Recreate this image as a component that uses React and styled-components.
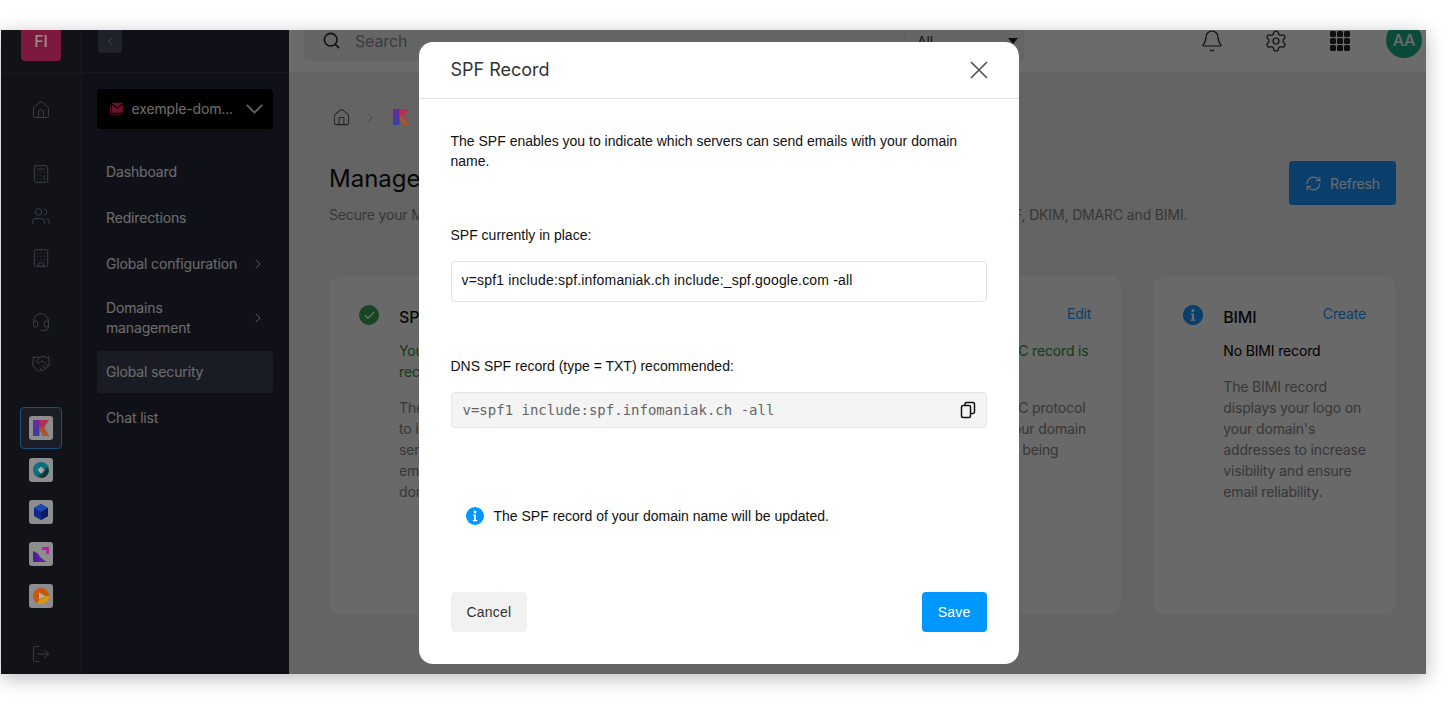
import React from "react";
import styled, { createGlobalStyle } from "styled-components";
import { Home, Calculator, Users, Building, Headset, Handshake, LogOut, ChevronLeft, ChevronRight, ChevronDown, Search, Bell, Settings, RefreshCw, Check } from "lucide-react";

const Global = createGlobalStyle`
  html, body { margin: 0; padding: 0; background: #fff; }
  body { font-family: Inter, "Liberation Sans", sans-serif; font-size: 14px; }
  * { box-sizing: border-box; }
`;

const Page = styled.div`
  width: 1456px;
  height: 704px;
  padding: 30px 30px 30px 1px;
  overflow: hidden;
`;
const Frame = styled.div`
  position: relative;
  width: 1425px;
  height: 644px;
  overflow: hidden;
  box-shadow: 0 4px 18px rgba(0, 0, 0, 0.28);
`;
const Screen = styled.div`
  display: flex;
  height: 664px;
  margin-top: -20px;
  background: #eeeeef;
  color: #222;
  letter-spacing: -0.15px;
`;
const Rail = styled.nav`
  width: 81px;
  flex: none;
  background: #2c2f3c;
  border-right: 1px solid #2f3242;
  display: flex;
  flex-direction: column;
  align-items: center;
`;
const RailHead = styled.div`
  width: 100%;
  height: 63px;
  flex: none;
  display: flex;
  align-items: center;
  justify-content: center;
  border-bottom: 1px solid #363a4c;
`;
const OrgBadge = styled.div`
  position: relative;
  z-index: 2;
  width: 40px;
  height: 40px;
  border-radius: 4px;
  background: #7b1a3c;
  color: #9a8a90;
  font-size: 16px;
  font-weight: 500;
  display: flex;
  align-items: center;
  justify-content: center;
`;
const RailGroup = styled.div`
  display: flex;
  flex-direction: column;
  margin-top: 22px;
  ${RailHead} + & { margin-top: 16px; }
`;
const RailItem = styled.div`
  width: 42px;
  height: 42px;
  display: flex;
  align-items: center;
  justify-content: center;
  color: #7f95aa;
  border-radius: 4px;
  background: ${(p) => (p.$active ? "#1b1d27" : "transparent")};
  border: ${(p) => (p.$active ? "1px solid #1c4f78" : "none")};
  position: relative;
  z-index: ${(p) => (p.$active ? 2 : "auto")};
`;
const RailFoot = styled(RailItem)`
  margin-top: 16px;
`;
const AppTile = styled.div`
  width: 24px;
  height: 24px;
  border-radius: 3px;
  background: #8d8d8d;
  display: flex;
  align-items: center;
  justify-content: center;
  position: relative;
  z-index: 2;
`;
const Sidebar = styled.aside`
  width: 207px;
  flex: none;
  background: #262a3a;
  display: flex;
  flex-direction: column;
`;
const SideHead = styled.div`
  height: 63px;
  flex: none;
  padding-left: 16px;
  display: flex;
  align-items: center;
  border-bottom: 1px solid #363a4c;
`;
const BackButton = styled.div`
  width: 24px;
  height: 24px;
  border-radius: 4px;
  background: #4a4f66;
  color: #c4c4c8;
  display: flex;
  align-items: center;
  justify-content: center;
`;
const SideBody = styled.div`
  padding: 16px 16px 0 15px;
`;
const DomainPicker = styled.div`
  height: 40px;
  border-radius: 4px;
  background: #000;
  display: flex;
  align-items: center;
  padding: 0 4px 0 13px;
  gap: 7px;
  color: #fff;
  font-size: 14px;
  margin-bottom: 22px;
`;
const PickerLabel = styled.span`
  flex: 1;
  white-space: nowrap;
  margin: -1px 0 0 1px;
`;
const NavList = styled.div`
  display: flex;
  flex-direction: column;
  gap: 4px;
`;
const NavItem = styled.div`
  min-height: ${(p) => (p.$tall ? "58px" : "42px")};
  border-radius: 4px;
  padding: 0 7px ${(p) => (p.$tall ? "1px" : "0")} 9px;
  display: flex;
  align-items: center;
  justify-content: space-between;
  color: #fff;
  font-size: 14px;
  line-height: 20px;
  background: ${(p) => (p.$active ? "#3f4459" : "transparent")};
`;
const NavChevron = styled(ChevronRight)`
  flex: none;
  color: #e8e8e8;
`;
const Main = styled.main`
  flex: 1;
  min-width: 0;
  display: flex;
  flex-direction: column;
`;
const TopBar = styled.header`
  height: 62px;
  flex: none;
  background: #fff;
  display: flex;
  align-items: center;
  padding: 0 4px 0 15px;
`;
const SearchBox = styled.div`
  width: 601px;
  height: 40px;
  background: #f0f0f0;
  border-radius: 4px 0 0 4px;
  display: flex;
  align-items: center;
  padding-left: 17px;
  gap: 14px;
  color: #222;
`;
const SearchIcon = styled(Search)`
  margin-left: 1px;
  margin-top: -2px;
`;
const SearchText = styled.span`
  font-size: 16px;
  color: #8a8f94;
`;
const ScopeSelect = styled.div`
  width: 119px;
  height: 40px;
  background: #f0f0f0;
  border-left: 1px solid #dcdcdc;
  border-radius: 0 4px 4px 0;
  display: flex;
  align-items: center;
  justify-content: space-between;
  padding: 0 6px 0 11px;
  font-size: 14px;
  color: #333;
  &::after {
    content: "";
    border-left: 5px solid transparent;
    border-right: 5px solid transparent;
    border-top: 6px solid #222;
  }
`;
const TopIcons = styled.div`
  margin-left: auto;
  display: flex;
  align-items: center;
  gap: 40px;
  color: #222;
`;
const Avatar = styled.div`
  width: 36px;
  height: 36px;
  border-radius: 50%;
  background: #1ab08c;
  margin: -2px 0 0 -4px;
  color: #fff;
  font-size: 16px;
  font-weight: 500;
  display: flex;
  align-items: center;
  justify-content: center;
`;
const AppsGrid = styled.div`
  display: grid;
  grid-template-columns: repeat(3, 6px);
  grid-auto-rows: 6px;
  gap: 1px;
  margin-left: 2px;
`;
const AppsDot = styled.i`
  display: block;
  background: #222;
  border-radius: 1.5px;
`;
const Content = styled.div`
  padding: 35px 30px 0 40px;
`;
const Crumbs = styled.div`
  display: flex;
  align-items: center;
  height: 20px;
  gap: 12px;
  padding-left: 3px;
  color: #555;
`;
const Brand = styled.div`
  position: relative;
  z-index: 2;
  display: flex;
  margin-left: 3px;
`;
const HeadRow = styled.div`
  display: flex;
  justify-content: space-between;
  align-items: flex-start;
  margin-top: 34px;
`;
const PageTitle = styled.h1`
  margin: 2px 0 0;
  font-size: 24px;
  font-weight: 400;
  line-height: 32px;
  color: #111;
  letter-spacing: 0;
`;
const RefreshButton = styled.div`
  width: 107px;
  height: 44px;
  border-radius: 4px;
  background: #1896ff;
  color: #fff;
  display: flex;
  align-items: center;
  justify-content: center;
  gap: 8px;
  font-size: 14px;
`;
const Lead = styled.p`
  margin: 0;
  line-height: 20px;
  font-size: 14px;
  color: #858585;
  white-space: nowrap;
`;
const Cards = styled.div`
  display: grid;
  grid-template-columns: repeat(4, 1fr);
  gap: 32px;
  margin-top: 51px;
`;
const Card = styled.section`
  height: 338px;
  background: #f9f9fa;
  border-radius: 12px;
  padding: 29px 30px;
  display: grid;
  grid-template-columns: 20px 1fr;
  column-gap: 20px;
  align-content: start;
`;
const CardBody = styled.div`
  min-width: 0;
  margin-top: -1px;
`;
const CardHead = styled.div`
  display: flex;
  justify-content: space-between;
  align-items: flex-start;
  height: 24px;
`;
const CardTitle = styled.h2`
  margin: 3px 0 0;
  font-size: 16px;
  font-weight: 500;
  line-height: 20px;
  color: #111;
`;
const CardLink = styled.span`
  color: #1896ff;
  font-size: 14px;
  line-height: 20px;
`;
const Status = styled.p`
  margin: 12px 0 0;
  font-size: 14px;
  line-height: 21px;
  white-space: nowrap;
  color: ${(p) => (p.$ok ? "#358c3d" : "#000")};
`;
const CardText = styled.p`
  margin: 15px 0 0;
  font-size: 14px;
  line-height: 21px;
  color: #858585;
`;
const StatusIcon = styled.div`
  width: 20px;
  height: 20px;
  border-radius: 50%;
  background: ${(p) => p.$bg};
  color: #fff;
  display: flex;
  align-items: center;
  justify-content: center;
`;
const Backdrop = styled.div`
  position: absolute;
  inset: 0;
  z-index: 1;
  background: rgba(0, 0, 0, 0.58);
  display: flex;
  justify-content: center;
  padding: 12px 0 0 10px;
`;
const Modal = styled.div`
  width: 600px;
  height: 622px;
  background: #fff;
  border-radius: 14px;
  font-family: "Liberation Sans", Arial, sans-serif;
  font-size: 14px;
  color: #111;
  display: flex;
  flex-direction: column;
`;
const ModalHead = styled.div`
  height: 57px;
  flex: none;
  padding: 0 31px 1px 32px;
  border-bottom: 1px solid #e3e3e3;
  display: flex;
  align-items: center;
  justify-content: space-between;
`;
const ModalTitle = styled.h3`
  margin: 0;
  font-family: Inter, "Liberation Sans", sans-serif;
  font-size: 18px;
  font-weight: 400;
  color: #333;
`;
const ModalBody = styled.div`
  padding: 32px 32px 0;
  display: flex;
  flex-direction: column;
`;
const Copy = styled.p`
  margin: 0;
  line-height: 20px;
`;
const Label = styled.label`
  display: block;
  margin-top: 54px;
  line-height: 20px;
`;
const Field = styled.div`
  margin-top: 16px;
  height: 41px;
  border: 1px solid #e3e3e3;
  border-radius: 4px;
  display: flex;
  align-items: center;
  padding: 0 0 3px 10px;
  letter-spacing: 0.18px;
`;
const CodeField = styled.div`
  margin-top: 16px;
  height: 36px;
  border: 1px solid #e6e6e6;
  border-radius: 4px;
  background: #f4f4f4;
  display: flex;
  align-items: center;
  justify-content: space-between;
  padding: 0 10px 0 11px;
  font-family: "DejaVu Sans Mono", "Liberation Mono", monospace;
  font-size: 14px;
  color: #666;
  white-space: nowrap;
`;
const Notice = styled.div`
  margin-top: 78px;
  padding-left: 15px;
  height: 20px;
  display: flex;
  align-items: center;
  gap: 10px;
`;
const ModalFoot = styled.div`
  display: flex;
  justify-content: space-between;
  padding: 0 32px;
  margin-top: 66px;
`;
const Button = styled.div`
  height: 40px;
  border-radius: 4px;
  padding: 0 16px;
  display: flex;
  align-items: center;
  font-size: 14px;
  letter-spacing: 0.2px;
  background: ${(p) => (p.$primary ? "#0098ff" : "#f1f1f1")};
  color: ${(p) => (p.$primary ? "#fff" : "#333")};
`;

const KLogo = ({ size = 16 }) => (
  <svg width={size} height={size} viewBox="0 0 16 16">
    <defs>
      <linearGradient id="kb" x1="0" y1="0" x2="0" y2="1">
        <stop offset="0" stopColor="#6a2a9c" />
        <stop offset="1" stopColor="#3a3fa8" />
      </linearGradient>
    </defs>
    <path d="M6 0h10L11 7.500 16 16H10L6.500 9z" fill="#b5304e" />
    <path d="M8.500 6 16 16h-6L6.500 9z" fill="#a8562c" />
    <path d="M0 0h6.500v16H0z" fill="url(#kb)" />
  </svg>
);
const DiscLogo = () => (
  <svg width="16" height="16" viewBox="0 0 16 16">
    <circle cx="8" cy="8" r="8" fill="#0f6f7a" />
    <path d="M16 8a8 8 0 0 1-8 8l-3-3a8 8 0 0 0 8-8z" fill="#14323a" />
    <path d="M8 4.500 11.500 8 8 11.500 4.500 8z" fill="#a8a8a8" />
  </svg>
);
const CubeLogo = () => (
  <svg width="16" height="16" viewBox="0 0 16 16">
    <path d="M8 0l7 4v8l-7 4-7-4V4z" fill="#0f2a8c" />
    <path d="M8 0l7 4-7 4-7-4z" fill="#1c49b8" />
    <path d="M8 8l7-4v8l-7 4z" fill="#0a1a5c" />
  </svg>
);
const SwissLogo = () => (
  <svg width="16" height="16" viewBox="0 0 16 16">
    <path d="M0 5c3 1 6 3 7 6l6 5H0z" fill="#4a1f9c" />
    <path d="M3 8c2 1 4 3 5 5l5 3H6z" fill="#6a1fa0" />
    <path d="M9 1h7v7h-3V4H9z" fill="#b81fa8" />
  </svg>
);
const OrangeLogo = () => (
  <svg width="16" height="16" viewBox="0 0 16 16">
    <circle cx="8" cy="8" r="8" fill="#c8560c" />
    <path d="M16 8a8 8 0 0 1-12 7l3-4a4 4 0 0 0 4-3z" fill="#d8980c" />
    <path d="M6 4.500 12 8l-6 3.500z" fill="#b0b0b0" />
  </svg>
);
const CloseIcon = () => (
  <svg width="18" height="18" viewBox="0 0 18 18" fill="none" stroke="#555" strokeWidth="1.7" strokeLinecap="round">
    <path d="M1.500 1.500l15 15M16.500 1.500l-15 15" />
  </svg>
);
const CopyIcon = () => (
  <svg width="16" height="18" viewBox="0 0 16 18" fill="none" stroke="#111" strokeWidth="1.5" strokeLinejoin="round">
    <rect x="1.500" y="4.500" width="9" height="12" rx="1.500" />
    <path d="M5 4.500V3a1.500 1.500 0 0 1 1.500-1.500H13A1.500 1.500 0 0 1 14.500 3v8a1.500 1.500 0 0 1-1.500 1.500h-2.500" />
  </svg>
);
const InfoIcon = ({ size = 18, fill = "#0098ff", glyph = "#fff" }) => (
  <svg width={size} height={size} viewBox="0 0 18 18">
    <circle cx="9" cy="9" r="9" fill={fill} />
    <circle cx="9" cy="5" r="1.400" fill={glyph} />
    <path d="M7 7.500h3V13h1.200v1.200H6.800V13H8V8.700H7z" fill={glyph} />
  </svg>
);
const MailIcon = () => (
  <svg width="15" height="14" viewBox="0 0 15 14">
    <path d="M0 3v9a2 2 0 0 0 2 2h10v-1H2a1 1 0 0 1-1-1V3z" fill="#ff2a6a" />
    <path d="M2.500 0h11a1 1 0 0 1 1 .7L8 5 2 .7A1 1 0 0 1 2.500 0z M2 2.200 8 6.500l6.500-4.300V10a1 1 0 0 1-1 1H3a1 1 0 0 1-1-1z" fill="#ff2a6a" />
  </svg>
);

const apps = [DiscLogo, CubeLogo, SwissLogo, OrangeLogo];
const dots = Array.from({ length: 9 });

export default function App() {
  return (
    <>
      <Global />
      <Page>
        <Frame>
          <Screen>
            <Rail>
              <RailHead><OrgBadge>FI</OrgBadge></RailHead>
              <RailGroup>
                <RailItem><Home size={20} strokeWidth={1.2} /></RailItem>
              </RailGroup>
              <RailGroup>
                <RailItem><Calculator size={20} strokeWidth={1.2} /></RailItem>
                <RailItem><Users size={20} strokeWidth={1.2} /></RailItem>
                <RailItem><Building size={20} strokeWidth={1.2} /></RailItem>
              </RailGroup>
              <RailGroup>
                <RailItem><Headset size={20} strokeWidth={1.2} /></RailItem>
                <RailItem><Handshake size={20} strokeWidth={1.2} /></RailItem>
              </RailGroup>
              <RailGroup>
                <RailItem $active><AppTile><KLogo /></AppTile></RailItem>
                {apps.map((L, i) => (
                  <RailItem key={i}><AppTile><L /></AppTile></RailItem>
                ))}
              </RailGroup>
              <RailFoot><LogOut size={20} strokeWidth={1.2} /></RailFoot>
            </Rail>
            <Sidebar>
              <SideHead>
                <BackButton><ChevronLeft size={15} strokeWidth={1.3} /></BackButton>
              </SideHead>
              <SideBody>
                <DomainPicker>
                  <MailIcon />
                  <PickerLabel>exemple-dom...</PickerLabel>
                  <ChevronDown size={32} strokeWidth={1.5} color="#e8e8e8" />
                </DomainPicker>
                <NavList>
                  <NavItem>Dashboard</NavItem>
                  <NavItem>Redirections</NavItem>
                  <NavItem>Global configuration<NavChevron size={16} strokeWidth={1.4} /></NavItem>
                  <NavItem $tall><span>Domains<br />management</span><NavChevron size={16} strokeWidth={1.4} /></NavItem>
                  <NavItem $active>Global security</NavItem>
                  <NavItem>Chat list</NavItem>
                </NavList>
              </SideBody>
            </Sidebar>
            <Main>
              <TopBar>
                <SearchBox><SearchIcon size={19} strokeWidth={2} /><SearchText>Search</SearchText></SearchBox>
                <ScopeSelect>All</ScopeSelect>
                <TopIcons>
                  <Bell size={24} strokeWidth={1.2} />
                  <Settings size={24} strokeWidth={1.2} />
                  <AppsGrid>{dots.map((_, i) => <AppsDot key={i} />)}</AppsGrid>
                  <Avatar>AA</Avatar>
                </TopIcons>
              </TopBar>
              <Content>
                <Crumbs>
                  <Home size={19} strokeWidth={1.3} />
                  <ChevronRight size={15} strokeWidth={1.2} color="#999" />
                  <Brand><KLogo /></Brand>
                </Crumbs>
                <HeadRow>
                  <PageTitle>Manage security</PageTitle>
                  <RefreshButton><RefreshCw size={17} strokeWidth={1.6} />Refresh</RefreshButton>
                </HeadRow>
                <Lead>Secure your Mail Service domain names by configuring all the essential email authentication protocols: SPF, DKIM, DMARC and BIMI.</Lead>
                <Cards>
                  <Card>
                    <StatusIcon $bg="#3ea556"><Check size={13} strokeWidth={2.4} /></StatusIcon>
                    <CardBody>
                      <CardHead><CardTitle>SPF</CardTitle><CardLink>Edit</CardLink></CardHead>
                      <Status $ok>Your SPF record is<br />recognized.</Status>
                      <CardText>The SPF record is<br />to indicate which<br />servers can send<br />emails with your<br />domain name.</CardText>
                    </CardBody>
                  </Card>
                  <Card>
                    <StatusIcon $bg="#3ea556"><Check size={13} strokeWidth={2.4} /></StatusIcon>
                    <CardBody>
                      <CardHead><CardTitle>DKIM</CardTitle><CardLink>Edit</CardLink></CardHead>
                      <Status $ok>Your DKIM record is<br />recognized.</Status>
                      <CardText>The DKIM record signs your emails.</CardText>
                    </CardBody>
                  </Card>
                  <Card>
                    <StatusIcon $bg="#3ea556"><Check size={13} strokeWidth={2.4} /></StatusIcon>
                    <CardBody>
                      <CardHead><CardTitle>DMARC</CardTitle><CardLink>Edit</CardLink></CardHead>
                      <Status $ok>The DMARC record is<br />valid.</Status>
                      <CardText>The DMARC protocol<br />protects your domain<br />name from being<br />spoofed.</CardText>
                    </CardBody>
                  </Card>
                  <Card>
                    <StatusIcon $bg="#1896ff"><InfoIcon size={20} fill="#1896ff" /></StatusIcon>
                    <CardBody>
                      <CardHead><CardTitle>BIMI</CardTitle><CardLink>Create</CardLink></CardHead>
                      <Status>No BIMI record</Status>
                      <CardText>The BIMI record displays your logo on your domain's addresses to increase visibility and ensure email reliability.</CardText>
                    </CardBody>
                  </Card>
                </Cards>
              </Content>
            </Main>
          </Screen>
          <Backdrop>
            <Modal>
              <ModalHead>
                <ModalTitle>SPF Record</ModalTitle>
                <CloseIcon />
              </ModalHead>
              <ModalBody>
                <Copy>The SPF enables you to indicate which servers can send emails with your domain name.</Copy>
                <Label>SPF currently in place:</Label>
                <Field>v=spf1 include:spf.infomaniak.ch include:_spf.google.com -all</Field>
                <Label>DNS SPF record (type = TXT) recommended:</Label>
                <CodeField>v=spf1 include:spf.infomaniak.ch -all<CopyIcon /></CodeField>
                <Notice><InfoIcon />The SPF record of your domain name will be updated.</Notice>
              </ModalBody>
              <ModalFoot>
                <Button>Cancel</Button>
                <Button $primary>Save</Button>
              </ModalFoot>
            </Modal>
          </Backdrop>
        </Frame>
      </Page>
    </>
  );
}
